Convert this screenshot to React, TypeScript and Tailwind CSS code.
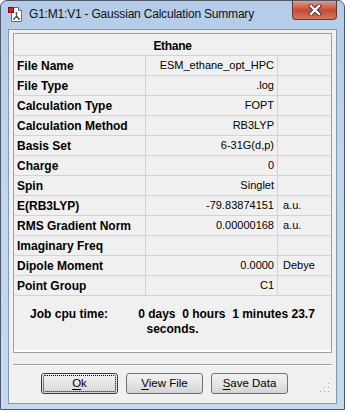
const rows: [string, string, string][] = [
  ["File Name", "ESM_ethane_opt_HPC", ""],
  ["File Type", ".log", ""],
  ["Calculation Type", "FOPT", ""],
  ["Calculation Method", "RB3LYP", ""],
  ["Basis Set", "6-31G(d,p)", ""],
  ["Charge", "0", ""],
  ["Spin", "Singlet", ""],
  ["E(RB3LYP)", "-79.83874151", "a.u."],
  ["RMS Gradient Norm", "0.00000168", "a.u."],
  ["Imaginary Freq", "", ""],
  ["Dipole Moment", "0.0000", "Debye"],
  ["Point Group", "C1", ""],
];

const WinIcon = () => (
  <svg width="16" height="16" viewBox="0 0 16 16">
    <path d="M3.5 1.5h7l3 3v11h-10z" fill="#fff" stroke="#6b6b6b" />
    <path d="M10.5 1.5v3h3" fill="#e8e8e8" stroke="#6b6b6b" />
    <rect x="0.5" y="1.5" width="5" height="5" fill="#d81e1e" stroke="#8a0c0c" />
    <path d="M8.5 7v3M8.5 10l-2.5 3M8.5 10l2.5 3" stroke="#555" strokeWidth="1.2" fill="none" />
    <circle cx="8.5" cy="7" r="1" fill="#555" />
    <circle cx="6" cy="13" r="1" fill="#555" />
    <circle cx="11" cy="13" r="1" fill="#555" />
  </svg>
);

const CloseX = () => (
  <svg width="14" height="12" viewBox="0 0 14 12">
    <path d="M3 2l8 8M11 2l-8 8" stroke="#4a2a26" strokeWidth="4.2" strokeLinecap="square" />
    <path d="M3 2l8 8M11 2l-8 8" stroke="#fff" strokeWidth="2.4" strokeLinecap="square" />
  </svg>
);

const Grip = () => (
  <svg width="10" height="10" viewBox="0 0 10 10">
    {[
      [8, 0],
      [8, 4],
      [4, 4],
      [8, 8],
      [4, 8],
      [0, 8],
    ].map(([x, y], i) => (
      <g key={i}>
        <rect x={x + 1} y={y + 1} width="1" height="1" fill="#fff" />
        <rect x={x} y={y} width="1" height="1" fill="#a0a0a0" />
      </g>
    ))}
  </svg>
);

const Btn = ({ first, rest, focus }: { first: string; rest: string; focus?: boolean }) => (
  <button
    className={`relative h-[21px] w-[77px] rounded-[3px] border ${
      focus ? "border-[#3c3c3c]" : "border-[#707070]"
    } bg-gradient-to-b from-[#f2f2f2] via-[#e6e6e6] to-[#d3d3d3] text-[11.5px] leading-none text-black`}
  >
    {focus && <span className="absolute inset-[1px] rounded-[2px] border border-dotted border-black" />}
    <span className="underline underline-offset-[2px]">{first}</span>
    {rest}
  </button>
);

export default function App() {
  return (
    <div
      className="flex h-[410px] w-[345px] flex-col rounded-t-[7px] border border-[#4b5869] bg-gradient-to-b from-[#b4cce7] via-[#c2d7ee] to-[#c4d8ee] text-black"
      style={{ fontFamily: '"Liberation Sans", Arial, sans-serif' }}
    >
      <div className="flex h-[28px] shrink-0 items-start">
        <div className="ml-[7px] mt-[5px]">
          <WinIcon />
        </div>
        <div className="ml-[5px] mt-[6px] text-[12px] leading-[15px] tracking-[-0.2px] text-[#111]">
          G1:M1:V1 - Gaussian Calculation Summary
        </div>
        <div className="ml-auto mr-[7px] flex h-[19px] w-[45px] items-center justify-center rounded-b-[4px] border border-t-0 border-[#6b3329] bg-gradient-to-b from-[#e09a88] via-[#c64a35] to-[#d5765e]">
          <CloseX />
        </div>
      </div>

      <div className="mx-[7px] mb-[5px] flex flex-1 flex-col border border-[#8497ad] bg-[#f0f0f0] px-[4px] pt-[3px]">
        <div className="border border-[#a0a0a0]">
          <div className="flex h-[22px] items-center justify-center border-b border-[#d2d2d2] pt-[2px] text-[12px] font-bold tracking-[-0.3px]">
            Ethane
          </div>
          {rows.map(([label, value, unit]) => (
            <div
              key={label}
              className="grid h-[20px] grid-cols-[132px_132px_1fr] border-b border-[#d2d2d2] text-[11px]"
            >
              <div className="flex items-center border-r border-[#d2d2d2] pl-[3px] text-[12px] font-bold">
                {label}
              </div>
              <div className="flex items-center justify-end border-r border-[#d2d2d2] pr-[3px]">{value}</div>
              <div className="flex items-center pl-[5px]">{unit}</div>
            </div>
          ))}
          <div className="h-[54px] pt-[11px] text-[12px] font-bold leading-[15px]">
            <div className="flex justify-center">
              <span>Job cpu time:</span>
              <span className="ml-[30px] whitespace-pre">0 days  0 hours  1 minutes 23.7</span>
            </div>
            <div className="text-center">seconds.</div>
          </div>
          <div className="h-[2px] bg-white" />
        </div>

        <div className="mt-[11px] border-t border-b border-t-[#a0a0a0] border-b-white" />

        <div className="mt-[7px] flex items-end">
          <div className="ml-[28px] flex gap-[8px]">
            <Btn first="O" rest="k" focus />
            <Btn first="V" rest="iew File" />
            <Btn first="S" rest="ave Data" />
          </div>
          <div className="ml-auto mr-[2px] mb-[1px]">
            <Grip />
          </div>
        </div>
      </div>
    </div>
  );
}
